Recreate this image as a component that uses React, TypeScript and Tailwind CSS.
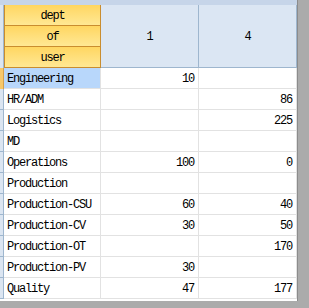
import React from 'react';

interface Row {
  dept: string;
  a?: number;
  b?: number;
}

const rows: Row[] = [
  { dept: 'Engineering', a: 10 },
  { dept: 'HR/ADM', b: 86 },
  { dept: 'Logistics', b: 225 },
  { dept: 'MD' },
  { dept: 'Operations', a: 100, b: 0 },
  { dept: 'Production' },
  { dept: 'Production-CSU', a: 60, b: 40 },
  { dept: 'Production-CV', a: 30, b: 50 },
  { dept: 'Production-OT', b: 170 },
  { dept: 'Production-PV', a: 30 },
  { dept: 'Quality', a: 47, b: 177 },
];

const mono = { fontFamily: '"Liberation Mono", "DejaVu Sans Mono", monospace' };

export default function App() {
  return (
    <div className="w-[309px] h-[308px] bg-[#ababab] overflow-hidden text-[12px] tracking-[-1.2px] text-black" style={mono}>
      <div className="w-[298px] h-[301px] bg-white flex flex-col border-r border-[#8c8c8c]">
        {/* top strip */}
        <div className="h-[5px] bg-[#c6d5e9] shrink-0" />

        <div className="flex">
          {/* row gutter */}
          <div className="w-[4px] flex flex-col">
            <div className="h-[63px] bg-[#dbe5f1] border-r border-[#9eb6ce]" />
            {rows.map((r, i) => (
              <div
                key={r.dept}
                className={
                  i === 0
                    ? 'h-[21px] bg-[#f7c86a] border-r border-[#d6a04a]'
                    : 'h-[21px] bg-[#dbe5f1] border-r border-b border-[#9eb6ce]'
                }
              />
            ))}
          </div>

          <div className="flex flex-col">
            {/* header */}
            <div className="flex h-[63px]">
              <div className="w-[97px] flex flex-col border-l border-r border-[#c98d2f]">
                {['dept', 'of', 'user'].map(t => (
                  <div
                    key={t}
                    className="h-[21px] pt-[2px] flex items-center justify-center bg-gradient-to-b from-[#ffd660] to-[#ffe893] border-b border-[#c98d2f]"
                  >
                    {t}
                  </div>
                ))}
              </div>
              <div className="w-[98px] pt-[2px] flex items-center justify-center bg-[#dbe6f3] border-r border-b border-[#9eb6ce]">
                1
              </div>
              <div className="w-[98px] pt-[2px] flex items-center justify-center bg-[#dbe6f3] border-r border-b border-[#9eb6ce]">
                4
              </div>
            </div>

            {/* data rows */}
            {rows.map((r, i) => (
              <div key={r.dept} className="flex h-[21px]">
                <div
                  className={
                    i === 0
                      ? 'w-[97px] pt-[2px] flex items-center pl-[3px] bg-[#b8d7fb] border-r border-b border-[#e2e2e2]'
                      : 'w-[97px] pt-[2px] flex items-center pl-[3px] border-r border-b border-[#e2e2e2]'
                  }
                >
                  {r.dept}
                </div>
                <div className="w-[98px] pt-[2px] flex items-center justify-end pr-[4px] border-r border-b border-[#e2e2e2]">
                  {r.a ?? ''}
                </div>
                <div className="w-[98px] pt-[2px] flex items-center justify-end pr-[4px] border-r border-b border-[#e2e2e2]">
                  {r.b ?? ''}
                </div>
              </div>
            ))}
          </div>
        </div>
      </div>
    </div>
  );
}
